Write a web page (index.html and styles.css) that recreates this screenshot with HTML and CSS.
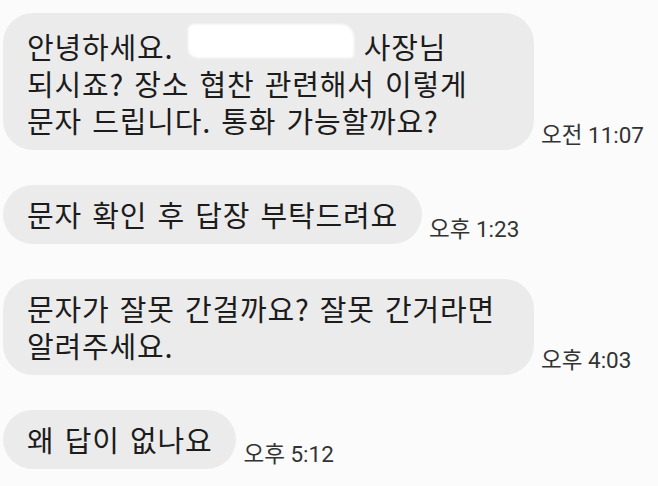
FILE: index.html
```html
<!DOCTYPE html>
<html>
<head>
	<meta charset="utf-8">
	<title>문자</title>
	<link rel="stylesheet" href="styles.css">
</head>

<body>

	<div class="chat">
		<!-- 첫 문자 -->
		<div class="row">
			<div class="bubble wide">안녕하세요. <span class="hide"></span> 사장님<br>되시죠? 장소 협찬 관련해서 이렇게<br>문자 드립니다. 통화 가능할까요?</div>
			<div class="time">오전 11:07</div>
		</div>

		<div class="row">
			<div class="bubble">문자 확인 후 답장 부탁드려요</div>
			<div class="time">오후 1:23</div>
		</div>

		<div class="row">
			<div class="bubble wide">문자가 잘못 간걸까요? 잘못 간거라면<br>알려주세요.</div>
			<div class="time">오후 4:03</div>
		</div>

		<div class="row">
			<div class="bubble">왜 답이 없나요</div>
			<div class="time">오후 5:12</div>
		</div>
	</div>

</body>
</html>
```

FILE: styles.css
```css
* {
    box-sizing: border-box;
}

body {
    margin: 0;
    background: #fbfbfb;
    font-family: "Noto Sans CJK KR", "Noto Sans", sans-serif;
    color: #1c1c1c;
}

.chat {
    display: flex;
    flex-direction: column;
    gap: 35px;
    padding: 13px 0 0 3px;
}

.row {
    display: flex;
    align-items: flex-end;
    gap: 7px;
}

.bubble {
    background: #ebebeb;
    border-radius: 30px;
    padding: 11px 24px 11px 24px;
    font-size: 29px;
    line-height: 37px;
    letter-spacing: 0.8px;
    word-spacing: 3px;
    white-space: nowrap;
}

.bubble.wide {
    width: 531px;
}

/* 이름 가린 부분 */
.hide {
    display: inline-block;
    width: 166px;
    height: 34px;
    margin-left: 4px;
    vertical-align: 1px;
    background: #fff;
    border-radius: 6px 14px 4px 10px;
    filter: blur(0.8px);
}

.time {
    font-family: Roboto, "Noto Sans CJK KR", sans-serif;
    font-size: 22.5px;
    line-height: 24px;
    margin-bottom: 3px;
    color: #333;
}
```
